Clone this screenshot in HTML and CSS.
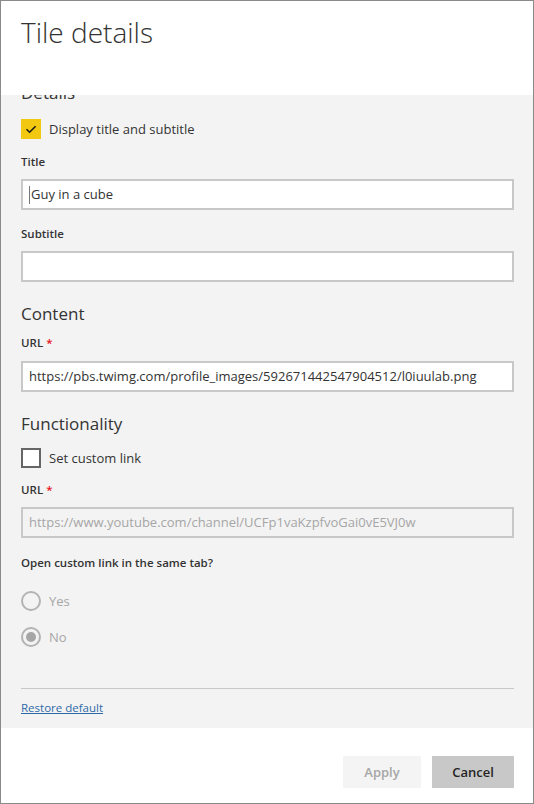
FILE: index.html
```html
<!DOCTYPE html>
<html lang="en">
<head>
<meta charset="utf-8">
<title>Tile details</title>
<link rel="stylesheet" href="styles.css">
</head>
<body>
<div class="dialog">
  <header class="head">
    <h1 class="head-title">Tile details</h1>
  </header>
  <div class="scroll">
    <div class="content">
      <h2 class="section-title section-first">Details</h2>
      <label class="check-row check-row-details">
        <span class="checkbox checkbox-on">
          <svg width="20" height="20" viewBox="0 0 20 20"><path d="M5.5 10.2 L8.6 13.2 L14.6 7.2" fill="none" stroke="#1a1a1a" stroke-width="1.6"/></svg>
        </span>
        <span class="check-text">Display title and subtitle</span>
      </label>
      <div class="field-label label-title">Title</div>
      <div class="input"><span class="caret"></span>Guy in a cube</div>
      <div class="field-label label-sub">Subtitle</div>
      <div class="input"></div>

      <h2 class="section-title section-next">Content</h2>
      <div class="field-label label-url">URL <span class="req">*</span></div>
      <div class="input">https://pbs.twimg.com/profile_images/592671442547904512/l0iuulab.png</div>

      <h2 class="section-title section-func">Functionality</h2>
      <label class="check-row check-row-func">
        <span class="checkbox checkbox-off"></span>
        <span class="check-text">Set custom link</span>
      </label>
      <div class="field-label label-url2">URL <span class="req">*</span></div>
      <div class="input input-disabled">https://www.youtube.com/channel/UCFp1vaKzpfvoGai0vE5VJ0w</div>
      <div class="field-label label-tab">Open custom link in the same tab?</div>
      <div class="radios">
        <div class="radio-row"><span class="radio"></span><span class="radio-text">Yes</span></div>
        <div class="radio-row"><span class="radio radio-on"></span><span class="radio-text">No</span></div>
      </div>
      <div class="rule"></div>
      <a class="restore" href="#">Restore default</a>
    </div>
  </div>
  <footer class="foot">
    <button class="btn btn-apply" disabled>Apply</button>
    <button class="btn btn-cancel">Cancel</button>
  </footer>
</div>
</body>
</html>
```
FILE: styles.css
```css
* { box-sizing: border-box; }
html, body { margin: 0; padding: 0; background: #ffffff; }
body {
  font-family: "Open Sans", "Noto Sans", sans-serif;
  color: #333333;
}
.dialog {
  width: 534px;
  height: 804px;
  border: 1px solid #8a8a8a;
  display: flex;
  flex-direction: column;
  background: #ffffff;
}
.head {
  height: 94px;
  flex: none;
  padding: 13px 0 0 20px;
}
.head-title {
  margin: 0;
  font-size: 28px;
  font-weight: 300;
  line-height: 36px;
  color: #333333;
}
.scroll {
  flex: 1;
  background: #f3f3f3;
  overflow: hidden;
  padding: 0 19px 0 20px;
}
.content {
  display: flex;
  flex-direction: column;
}
.section-title {
  margin: 0;
  font-size: 17px;
  font-weight: 400;
  line-height: 28px;
  height: 28px;
  color: #333333;
}
.section-first { margin-top: -16px; }
.section-next { margin-top: 18px; }
.section-func { margin-top: 18px; }
.check-row {
  display: flex;
  align-items: center;
  height: 20px;
  gap: 8px;
}
.check-row-details { margin-top: 12px; }
.check-row-func { margin-top: 10px; }
.checkbox {
  width: 20px;
  height: 20px;
  flex: none;
  display: block;
}
.checkbox svg { display: block; }
.checkbox-on { background: #f2c811; }
.checkbox-off { border: 2px solid #666666; background: #ffffff; }
.check-text {
  font-size: 13px;
  line-height: 20px;
  color: #333333;
}
.field-label {
  font-size: 11.5px;
  font-weight: 600;
  line-height: 16px;
  height: 16px;
  color: #333333;
  margin-bottom: 9px;
}
.label-title { margin-top: 15px; margin-bottom: 9px; }
.label-sub { margin-top: 16px; margin-bottom: 9px; }
.label-url { margin-top: 7px; margin-bottom: 10px; }
.label-url2 { margin-top: 14px; margin-bottom: 9px; }
.label-tab { margin-top: 17px; margin-bottom: 20px; }
.req { color: #e81123; }
.input {
  height: 31px;
  border: 2px solid #c8c8c8;
  background: #ffffff;
  font-size: 13px;
  line-height: 27px;
  padding-left: 6px;
  color: #333333;
  white-space: nowrap;
  overflow: hidden;
  display: flex;
  align-items: center;
}
.caret {
  display: inline-block;
  width: 1px;
  height: 18px;
  background: #777777;
  margin-right: 1px;
}
.input-disabled {
  background: #f3f3f3;
  color: #a6a6a6;
}
.radios {
  display: flex;
  flex-direction: column;
  gap: 16px;
}
.radio-row {
  display: flex;
  align-items: center;
  height: 20px;
  gap: 8px;
}
.radio {
  width: 20px;
  height: 20px;
  border-radius: 50%;
  border: 2px solid #b3b3b3;
  flex: none;
  display: flex;
  align-items: center;
  justify-content: center;
}
.radio-on::after {
  content: "";
  width: 10px;
  height: 10px;
  border-radius: 50%;
  background: #a6a6a6;
}
.radio-text {
  font-size: 13px;
  color: #a6a6a6;
  line-height: 20px;
}
.rule {
  height: 1px;
  background: #c8c8c8;
  margin-top: 41px;
}
.restore {
  margin-top: 11px;
  font-size: 11.5px;
  line-height: 16px;
  color: #2f6aa8;
  text-decoration: underline;
  align-self: flex-start;
}
.foot {
  height: 75px;
  flex: none;
  display: flex;
  justify-content: flex-end;
  align-items: flex-start;
  gap: 11px;
  padding: 28px 19px 0 0;
}
.btn {
  height: 32px;
  border: none;
  font-family: inherit;
  font-size: 13px;
  font-weight: 600;
  padding: 0;
}
.btn-apply {
  width: 78px;
  background: #f4f4f4;
  color: #a6a6a6;
}
.btn-cancel {
  width: 82px;
  background: #c8c8c8;
  color: #252423;
}
```
